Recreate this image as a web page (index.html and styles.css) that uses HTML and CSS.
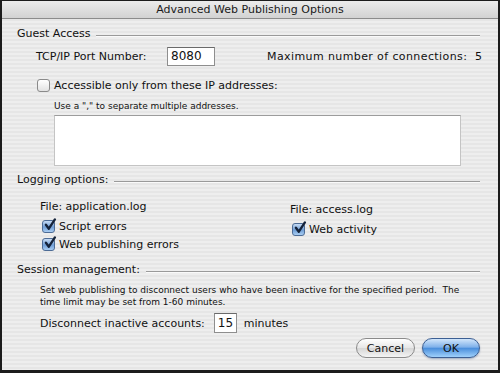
FILE: index.html
```html
<!DOCTYPE html>
<html lang="en">
<head>
    <meta charset="UTF-8">
    <title>Advanced Web Publishing Options</title>
    <link rel="stylesheet" href="styles.css">
</head>
<body>
    <div class="window">
        <div class="titlebar">Advanced Web Publishing Options</div>

        <div class="content">
            <!-- Guest Access -->
            <div class="section-head head-guest">
                <span>Guest Access</span>
                <div class="rule"></div>
            </div>

            <div class="port-row">
                <span class="port-label">TCP/IP Port Number:</span>
                <div class="field port-field">8080</div>
                <span class="max-conn">Maximum number of connections:&nbsp; 5</span>
            </div>

            <div class="check-row ip-row">
                <span class="checkbox"></span>
                <span>Accessible only from these IP addresses:</span>
            </div>
            <div class="hint">Use a "," to separate multiple addresses.</div>
            <div class="ip-list"></div>

            <!-- Logging -->
            <div class="section-head head-logging">
                <span>Logging options:</span>
                <div class="rule"></div>
            </div>

            <div class="log-columns">
                <div class="log-col app-col">
                    <div class="file-name">File: application.log</div>
                    <div class="check-row">
                        <span class="checkbox checked"><svg viewBox="0 0 12 12"><path d="M2.5 5.8 L5 9.2 L10.2 1.2" /></svg></span>
                        <span>Script errors</span>
                    </div>
                    <div class="check-row">
                        <span class="checkbox checked"><svg viewBox="0 0 12 12"><path d="M2.5 5.8 L5 9.2 L10.2 1.2" /></svg></span>
                        <span>Web publishing errors</span>
                    </div>
                </div>
                <div class="log-col access-col">
                    <div class="file-name">File: access.log</div>
                    <div class="check-row">
                        <span class="checkbox checked"><svg viewBox="0 0 12 12"><path d="M2.5 5.8 L5 9.2 L10.2 1.2" /></svg></span>
                        <span>Web activity</span>
                    </div>
                </div>
            </div>

            <!-- Session -->
            <div class="section-head head-session">
                <span>Session management:</span>
                <div class="rule"></div>
            </div>

            <p class="session-desc">Set web publishing to disconnect users who have been inactive for the specified period.&nbsp; The time limit may be set from 1-60 minutes.</p>

            <div class="timeout-row">
                <span>Disconnect inactive accounts:</span>
                <div class="field timeout-field">15</div>
                <span>minutes</span>
            </div>

            <div class="buttons">
                <button class="btn btn-cancel">Cancel</button>
                <button class="btn btn-ok">OK</button>
            </div>
        </div>
    </div>
</body>
</html>
```

FILE: styles.css
```css
/* Global */
body {
    margin: 0;
    padding: 0;
    background: #ffffff;
    font-family: 'DejaVu Sans', sans-serif;
    font-size: 11px;
    color: #111;
}

.window {
    width: 500px;
    height: 373px;
    box-sizing: border-box;
    border: 2px solid #1c1c1c;
    border-top-width: 1px;
    border-bottom-width: 3px;
    background-color: #ececec;
    background-image: repeating-linear-gradient(to bottom, #eeeeee 0, #eeeeee 2px, #e6e6e6 2px, #e6e6e6 4px);
    display: flex;
    flex-direction: column;
}

/* Title bar */
.titlebar {
    height: 17px;
    line-height: 17px;
    text-align: center;
    font-size: 11px;
    color: #1a1a1a;
    background: linear-gradient(to bottom, #ececec, #d2d2d2);
    border-bottom: 1px solid #8c8c8c;
}

.content {
    padding: 0 18px 0 15px;
    display: flex;
    flex-direction: column;
}

/* Section headers with etched rule */
.section-head {
    display: flex;
    align-items: center;
    height: 14px;
    line-height: 14px;
}

.section-head .rule {
    flex: 1;
    height: 0;
    margin-left: 6px;
    margin-top: 4px;
    border-top: 1px solid #9a9a9a;
    border-bottom: 1px solid #fafafa;
}

.head-guest { margin-top: 8px; }
.head-logging { margin-top: 7px; }
.head-session { margin-top: 10px; }

/* Inputs */
.field {
    box-sizing: border-box;
    background: #fff;
    border: 1px solid #8e8e8e;
    border-top-color: #6a6a6a;
    font-size: 12px;
    padding-left: 3px;
}

.port-row {
    display: flex;
    align-items: center;
    height: 20px;
    margin-top: 5px;
}

.port-row > * {
    flex-shrink: 0;
}

.port-label {
    margin-left: 19px;
    width: 131px;
}

.port-field {
    width: 48px;
    height: 19px;
    line-height: 17px;
}

.max-conn {
    margin-left: 52px;
    letter-spacing: 0.4px;
    white-space: nowrap;
}

/* Checkboxes */
.check-row {
    display: flex;
    align-items: center;
    height: 18px;
    white-space: nowrap;
}

.checkbox {
    box-sizing: border-box;
    width: 13px;
    height: 13px;
    margin-right: 4px;
    border: 1px solid #8a8a8a;
    border-radius: 3px;
    background: linear-gradient(to bottom, #ffffff, #e2e2e2);
    position: relative;
}

.checkbox.checked {
    border-color: #4d6c96;
    background: linear-gradient(to bottom, #c7dcf5, #6f9ed6 55%, #a9cdf2);
}

.checkbox svg {
    position: absolute;
    left: 0;
    top: -3px;
    width: 14px;
    height: 14px;
}

.checkbox svg path {
    fill: none;
    stroke: #15233a;
    stroke-width: 2;
    stroke-linecap: round;
    stroke-linejoin: round;
}

.ip-row {
    margin-top: 10px;
    margin-left: 20px;
}

.hint {
    margin-top: 6px;
    margin-left: 37px;
    font-size: 9px;
    line-height: 12px;
}

.ip-list {
    margin-top: 3px;
    margin-left: 37px;
    width: 407px;
    height: 51px;
    box-sizing: border-box;
    background: #fff;
    border: 1px solid #c4c4c4;
    border-top-color: #9c9c9c;
}

/* Logging columns */
.log-columns {
    display: flex;
    margin-top: 13px;
    padding-left: 23px;
}

.app-col {
    flex: 0 0 250px;
}

.access-col {
    flex: 1;
    padding-top: 3px;
}

.file-name {
    height: 14px;
    line-height: 14px;
    margin-bottom: 3px;
}

.log-col .check-row {
    margin-left: 2px;
}

/* Session */
.session-desc {
    margin: 7px 0 0 23px;
    font-size: 9px;
    line-height: 12px;
    width: 440px;
}

.timeout-row {
    display: flex;
    align-items: center;
    gap: 7px;
    margin-top: 5px;
    margin-left: 23px;
    height: 20px;
}

.timeout-field {
    width: 23px;
    height: 20px;
    line-height: 18px;
    padding-left: 3px;
    margin-left: 2px;
}

/* Buttons */
.buttons {
    display: flex;
    justify-content: flex-end;
    gap: 7px;
    margin-top: 5px;
}

.btn {
    height: 20px;
    border-radius: 10px;
    font-family: 'DejaVu Sans', sans-serif;
    font-size: 11px;
    padding: 0;
    color: #111;
}

.btn-cancel {
    width: 59px;
    border: 1px solid #8a8a8a;
    background: linear-gradient(to bottom, #ffffff, #e6e6e6 50%, #d6d6d6 51%, #f4f4f4);
}

.btn-ok {
    width: 58px;
    border: 1px solid #3c5f93;
    background: linear-gradient(to bottom, #d2e6fb, #7fb1ea 45%, #4b8fdc 52%, #9fd0fb);
    box-shadow: 0 1px 2px rgba(0, 40, 100, 0.35);
}
```
